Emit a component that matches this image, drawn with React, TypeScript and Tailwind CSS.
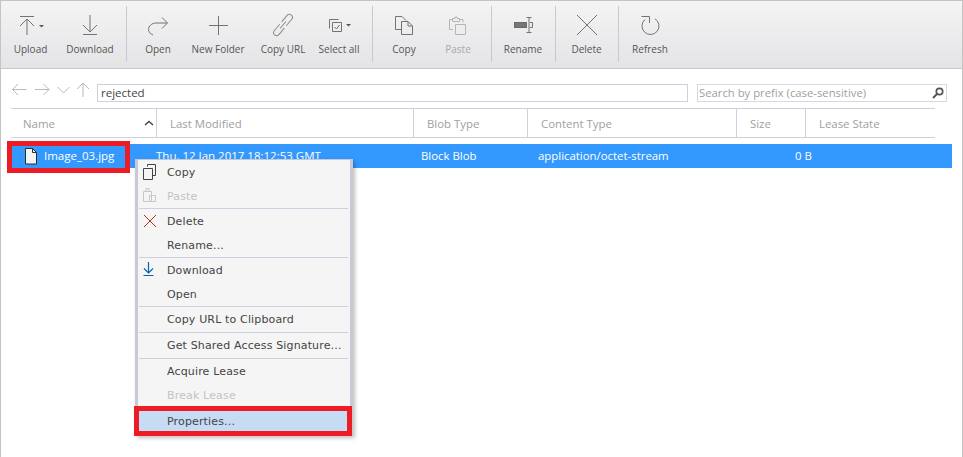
import type { ReactNode } from 'react'

const toolbarGroups = [
  [
    { label: 'Upload', width: 'w-[59px]', icon: <UploadIcon /> },
    { label: 'Download', width: 'w-[60px]', icon: <DownloadIcon /> },
  ],
  [
    { label: 'Open', width: 'w-[62px]', icon: <OpenIcon /> },
    { label: 'New Folder', width: 'w-[58px]', icon: <PlusIcon /> },
    { label: 'Copy URL', width: 'w-[72px]', icon: <LinkIcon /> },
    { label: 'Select all', width: 'w-[40px]', icon: <SelectIcon /> },
  ],
  [
    { label: 'Copy', width: 'w-[64px]', icon: <CopyIcon /> },
    { label: 'Paste', width: 'w-[44px]', icon: <PasteIcon />, disabled: true },
  ],
  [{ label: 'Rename', width: 'w-[64px]', icon: <RenameIcon /> }],
  [{ label: 'Delete', width: 'w-[63px]', icon: <CrossIcon /> }],
  [{ label: 'Refresh', width: 'w-[64px]', icon: <RefreshIcon /> }],
]

const groupPadding = ['pr-[6px]', 'pl-[1px] pr-[13px]', 'pr-[11px]', '', '', '']

const columns = [
  { label: 'Name', width: 'w-[146px]', pad: 'pl-[12px]' },
  { label: 'Last Modified', width: 'w-[257px]', pad: 'pl-[13px]' },
  { label: 'Blob Type', width: 'w-[114px]', pad: 'pl-[13px]' },
  { label: 'Content Type', width: 'w-[209px]', pad: 'pl-[13px]' },
  { label: 'Size', width: 'w-[69px]', pad: 'pl-[13px]' },
  { label: 'Lease State', width: 'w-[129px]', pad: 'pl-[13px]' },
]

function Svg({ children, w = 28, h = 28, color = '#737373' }: { children: ReactNode; w?: number; h?: number; color?: string }) {
  return (
    <svg width={w} height={h} viewBox={`0 0 ${w} ${h}`} fill="none" stroke={color} strokeWidth="1">
      {children}
    </svg>
  )
}

function UploadIcon() {
  return (
    <Svg w={34} h={24}>
      <path d="M6 3.500h14M13 22V6M6 13l7-7 7 7" />
      <path d="M25 12h5l-2.500 2.500z" fill="#555" stroke="none" />
    </Svg>
  )
}
function DownloadIcon() {
  return (
    <Svg w={24} h={24}>
      <path d="M5 21.500h14M12 2v17M5 12l7 7 7-7" />
    </Svg>
  )
}
function OpenIcon() {
  return (
    <Svg w={24} h={24}>
      <path d="M21 10H10C6 10 2.500 13 2.500 16.500 2.500 19 4.500 21 7 22M16 4.500l5.500 5.500-5.500 5.500" />
    </Svg>
  )
}
function PlusIcon() {
  return (
    <Svg w={24} h={24}>
      <path d="M12.500 3v19M3 12.500h19" />
    </Svg>
  )
}
function LinkIcon() {
  return (
    <Svg w={24} h={24} color="#8a8a8a">
      <g transform="rotate(-50 12 12)">
        <path d="M10.500 9H2a3 3 0 0 0 0 6h8.500" />
        <path d="M13.500 9H22a3 3 0 0 1 0 6h-8.500" />
        <path d="M7.500 12h9" />
      </g>
    </Svg>
  )
}
function SelectIcon() {
  return (
    <Svg w={30} h={16}>
      <path d="M5.500 11.500v-9h9M8.500 14.500v-9h9v9z" />
      <path d="M10.500 10l2 2 3-4" />
      <path d="M22 7h5l-2.500 2.500z" fill="#555" stroke="none" />
    </Svg>
  )
}
function CopyIcon() {
  return (
    <Svg w={22} h={24}>
      <path d="M8.500 16.500H2.500V3.500H9l4 4" />
      <path d="M8.500 8.500H15l4.500 4.500v8.500h-11zM15 8.500V13h4.500" />
    </Svg>
  )
}
function PasteIcon() {
  return (
    <Svg w={22} h={24} color="#b5b5b5">
      <path d="M6 16.500H2.500V6.500H5M13 6.500h3v3" />
      <path d="M5.500 8.500v-3H8V4h2v1.500h2.500v3z" />
      <path d="M8.500 11.500h10v10h-10z" />
    </Svg>
  )
}
function RenameIcon() {
  return (
    <Svg w={22} h={22}>
      <rect x="2.500" y="8.500" width="12" height="5" fill="#777" stroke="#6a6a6a" />
      <path d="M14.500 3.500h5M14.500 18.500h5M17 3.500v15M18 8.500h2.500v5H18" />
    </Svg>
  )
}
function CrossIcon() {
  return (
    <Svg w={22} h={22}>
      <path d="M1 1l20 20M21 1 1 21" />
    </Svg>
  )
}
function RefreshIcon() {
  return (
    <Svg w={22} h={24}>
      <path d="M6 6.500A8.500 8.500 0 1 0 16 5.800M2.500 3.500H10.500V10" />
    </Svg>
  )
}
function FileIcon() {
  return (
    <svg width="14" height="17" viewBox="0 0 14 17" fill="#f4f4f4" stroke="#2c2c2c">
      <path d="M1.500.5h7l4 4v11.500h-11z" />
      <path d="M8.500.5v4h4" fill="none" />
    </svg>
  )
}
function SearchIcon() {
  return (
    <svg width="14" height="14" viewBox="0 0 14 14" fill="none" stroke="#555">
      <circle cx="8.500" cy="5.500" r="3.200" strokeWidth="1.700" />
      <path d="M6 8 2 12" strokeWidth="2" />
    </svg>
  )
}

function Sep() {
  return <div className="mx-[-0.5px] h-[56px] w-px shrink-0 bg-[#c9c9d6]" />
}

function Toolbar() {
  return (
    <div className="flex h-[68px] items-start border-b border-[#c7c7d4] bg-gradient-to-b from-[#f4f4f4] to-[#e4e4e7] pt-[5px]">
      {toolbarGroups.map((group, i) => (
        <div key={i} className="flex items-start">
          {i > 0 && <Sep />}
          <div className={`flex ${groupPadding[i]}`}>
            {group.map((item) => (
              <div key={item.label} className={`${item.width} flex flex-col items-center`}>
                <div className="mt-[3px] flex h-[32px] items-center justify-center">{item.icon}</div>
                <span className={`mt-[1px] text-[10px] leading-[15px] whitespace-nowrap ${item.disabled ? 'text-[#a8a8a8]' : 'text-[#555555]'}`}>
                  {item.label}
                </span>
              </div>
            ))}
          </div>
        </div>
      ))}
    </div>
  )
}

function AddressBar() {
  return (
    <div className="flex h-[39px] items-start pt-[15px]">
      <div className="-mt-[3px] flex w-[96px] justify-start pl-[11px]">
        <svg width="82" height="18" viewBox="0 0 82 18" fill="none" stroke="#b8b8b8">
          <path d="M0.500 8.500h14M6 3 .5 8.500 6 14" />
          <path d="M23 8.500h14M31.500 3 37 8.500 31.500 14" />
          <path d="M45.500 6l6 6 6-6" />
          <path d="M71 16V2M65 8l6-6 6 6" />
        </svg>
      </div>
      <div className="flex h-[18px] w-[591px] items-center border border-[#d0d0dc] pl-[3px] text-[11.5px] text-[#444]">rejected</div>
      <div className="ml-[9px] flex h-[18px] w-[250px] items-center justify-between border border-[#d8d8e2] pl-[1px] pr-[1px] text-[11.3px] text-[#a0a0a0]">
        <span>Search by prefix (case-sensitive)</span>
        <SearchIcon />
      </div>
    </div>
  )
}

function HeaderRow() {
  return (
    <div className="ml-[10px] flex h-[30px] w-[924px] border-y border-[#d0d0dc]">
      {columns.map((col, i) => (
        <div
          key={col.label}
          className={`${col.width} ${col.pad} flex items-center justify-between pt-[2px] text-[11.4px] text-[#a0a0a0] ${i < columns.length - 1 ? 'border-r border-[#d0d0dc]' : ''}`}
        >
          <span>{col.label}</span>
          {i === 0 && (
            <svg width="10" height="6" viewBox="0 0 10 6" fill="none" stroke="#444" strokeWidth="1.400" className="mr-[2px] -mt-[2px]">
              <path d="M1 5l4-3.500L9 5" />
            </svg>
          )}
        </div>
      ))}
    </div>
  )
}

function SelectedRow() {
  return (
    <div className="mt-[6px] ml-[10px] flex h-[24px] w-[941px] items-center bg-[#3399ff] text-[11.4px] font-medium text-white">
      <div className="flex w-[145px] items-center pl-[13px]">
        <FileIcon />
        <span className="ml-[6px] text-[11.5px]">Image_03.jpg</span>
      </div>
      <div className="w-[265px] text-[11.5px] font-normal">Thu, 12 Jan 2017 18:12:53 GMT</div>
      <div className="w-[117px]">Block Blob</div>
      <div className="w-[257px]">application/octet-stream</div>
      <div>0 B</div>
    </div>
  )
}

function MenuItem({ label, disabled, icon, className }: { label: string; disabled?: boolean; icon?: ReactNode; className?: string }) {
  return (
    <div className={`relative flex h-[24px] items-center pl-[28px] pt-[2px] tracking-[0.15px] whitespace-nowrap ${disabled ? 'text-[#c4c4c4]' : 'text-[#444444]'} ${className ?? ''}`}>
      {icon}
      {label}
    </div>
  )
}

function MenuSep() {
  return <div className="h-px bg-[#cfcfe0]" />
}

function ContextMenu() {
  return (
    <div className="absolute left-[134px] top-[158px] h-[277px] w-[218px] border-x-[3px] border-t border-[#c9c9d6] bg-[#f5f5f5] pl-[1px] pr-[2px] text-[11px] shadow-[2px_2px_4px_rgba(0,0,0,0.25)]" style={{ fontFamily: '"DejaVu Sans", sans-serif' }}>
      <MenuItem
        label="Copy"
        icon={
          <svg width="14" height="18" viewBox="0 0 14 18" fill="none" stroke="#444" className="absolute left-[4px] top-[3px]">
            <path d="M4.500 3.500v-2h8v11h-3" />
            <path d="M.5 5.500h9v11h-9z" />
          </svg>
        }
      />
      <MenuItem
        label="Paste"
        disabled
        icon={
          <svg width="14" height="18" viewBox="0 0 14 18" fill="none" stroke="#c8c8c8" className="absolute left-[4px] top-[1px]">
            <path d="M.5 6.500h8v10h-8zM6.500 10.500h6v6h-6zM3 6.500v-3h3v3" />
          </svg>
        }
      />
      <MenuSep />
      <MenuItem
        label="Delete"
        icon={
          <svg width="14" height="16" viewBox="0 0 14 16" fill="none" stroke="#b5301f" className="absolute left-[4px] top-[5px]">
            <path d="M1 1l12 12M13 1 1 13" />
          </svg>
        }
      />
      <MenuItem label="Rename..." />
      <MenuSep />
      <MenuItem
        label="Download"
        icon={
          <svg width="14" height="16" viewBox="0 0 14 16" fill="none" stroke="#0a63b0" strokeWidth="1.200" className="absolute left-[4px] top-[3px]">
            <path d="M.5 14.500h10M5.500 1v11M1 7.500l4.500 4.500L10 7.500" />
          </svg>
        }
      />
      <MenuItem label="Open" />
      <MenuSep />
      <MenuItem label="Copy URL to Clipboard" className="h-[25px]" />
      <MenuSep />
      <MenuItem label="Get Shared Access Signature..." className="h-[25px]" />
      <MenuSep />
      <MenuItem label="Acquire Lease" />
      <MenuItem label="Break Lease" disabled />
      <MenuItem label="Properties..." className="mt-[2px] bg-[#c6dcf4]" />
    </div>
  )
}

export default function App() {
  return (
    <div className="relative h-[457px] w-[963px] overflow-hidden border-x border-t border-[#c4c4c4] bg-white" style={{ fontFamily: '"Open Sans", sans-serif' }}>
      <Toolbar />
      <AddressBar />
      <HeaderRow />
      <SelectedRow />
      <ContextMenu />
      {/* red callouts drawn over the screenshot */}
      <div className="absolute left-[6px] top-[140px] h-[32px] w-[123px] border-[5px] border-[#ed1c24]" />
      <div className="absolute left-[133px] top-[405px] h-[30px] w-[218px] border-[5px] border-[#ed1c24]" />
    </div>
  )
}
